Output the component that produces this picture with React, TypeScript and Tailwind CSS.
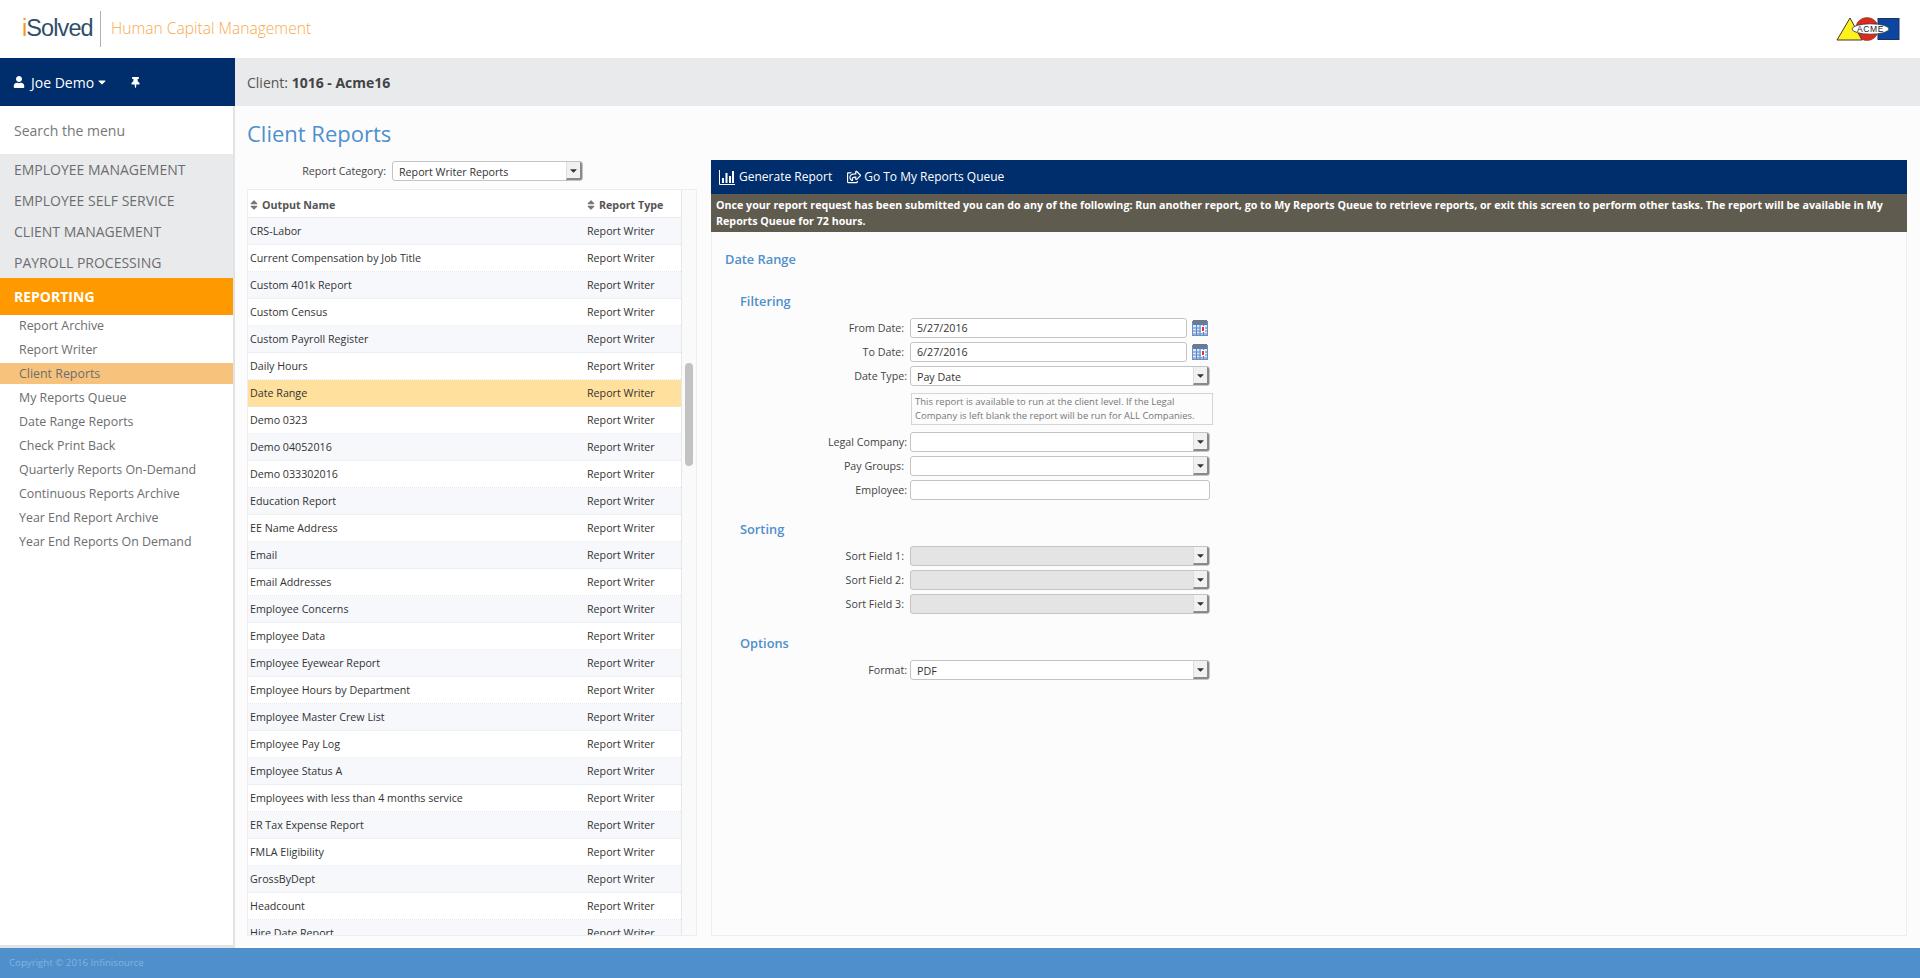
import React from "react";
import { FaUser, FaThumbtack, FaCaretDown, FaSort, FaRegShareSquare } from "react-icons/fa";

const menu = ["Employee Management", "Employee Self Service", "Client Management", "Payroll Processing"];
const sub = ["Report Archive", "Report Writer", "Client Reports", "My Reports Queue", "Date Range Reports", "Check Print Back", "Quarterly Reports On-Demand", "Continuous Reports Archive", "Year End Report Archive", "Year End Reports On Demand"];
const rows = ["CRS-Labor", "Current Compensation by Job Title", "Custom 401k Report", "Custom Census", "Custom Payroll Register", "Daily Hours", "Date Range", "Demo 0323", "Demo 04052016", "Demo 033302016", "Education Report", "EE Name Address", "Email", "Email Addresses", "Employee Concerns", "Employee Data", "Employee Eyewear Report", "Employee Hours by Department", "Employee Master Crew List", "Employee Pay Log", "Employee Status A", "Employees with less than 4 months service", "ER Tax Expense Report", "FMLA Eligibility", "GrossByDept", "Headcount", "Hire Date Report"];

function Arrow() {
  return (
    <span className="flex h-full w-[16px] shrink-0 items-center justify-center border-r-2 border-b-2 border-l border-r-[#8a8a8a] border-b-[#8a8a8a] border-l-[#ddd] bg-[#f1f1f1]">
      <FaCaretDown className="text-[11px] text-[#333]" />
    </span>
  );
}

function Select({ value = "", disabled = false, width = "w-[300px]" }: { value?: string; disabled?: boolean; width?: string }) {
  return (
    <div className={`flex h-[20px] ${width} items-center overflow-hidden rounded-[3px] border border-[#c4c4c4] ${disabled ? "bg-[#e4e4e4]" : "bg-white"}`}>
      <span className="flex-1 pt-[2px] pl-[6px] text-[10.7px] leading-none text-[#333]">{value}</span>
      <Arrow />
    </div>
  );
}

function Calendar() {
  return (
    <svg width="16" height="16" viewBox="0 0 16 16" className="ml-[5px] shrink-0">
      <rect x="0.5" y="1.5" width="15" height="14" fill="#dfe9f6" stroke="#6a8fc4" />
      <rect x="1" y="0" width="14" height="3" fill="#77787c" />
      <rect x="1" y="3" width="14" height="2" fill="#4f7fc4" />
      <path d="M1 8h14M1 11h14M1 14h14M4.5 5v10M8 5v10M11.5 5v10" stroke="#5b86c4" strokeWidth="1" />
      <rect x="9" y="6" width="4" height="6" fill="#fff" />
      <rect x="10" y="7" width="2" height="4" fill="#e5332a" />
    </svg>
  );
}

function Row({ label, end = 0, children }: { label: string; end?: number; children: React.ReactNode }) {
  return (
    <div className="mb-[4px] flex h-[20px] items-center">
      <span className={`w-[198px] shrink-0 text-right text-[10.7px] leading-none text-[#444] ${end ? "pr-[6px]" : "pr-[3px]"}`}>{label}</span>
      {children}
    </div>
  );
}

function DateRow({ label, value }: { label: string; value: string }) {
  return (
    <Row label={label} end={1}>
      <div className="flex h-[20px] w-[277px] items-center rounded-[3px] border border-[#c4c4c4] bg-white pt-[1px] pl-[6px] text-[10.7px] leading-none text-[#333]">{value}</div>
      <Calendar />
    </Row>
  );
}

function Section({ children, className }: { children: React.ReactNode; className: string }) {
  return <h3 className={`text-[12.8px] leading-[20px] font-semibold text-[#4f8fcc] ${className}`}>{children}</h3>;
}

export default function App() {
  return (
    <div className="flex h-[978px] w-[1920px] flex-col overflow-hidden bg-[#fcfcfc] font-['Open_Sans',sans-serif] text-[12px] text-[#333]">
      <header className="flex h-[58px] shrink-0 items-center bg-white pr-[20px] pl-[22px]">
        <span className="w-[70px] font-['Liberation_Sans',sans-serif] text-[23.5px] leading-none tracking-[-0.9px] text-[#2f4f68]">
          <span className="text-[#f39a1e]">i</span>Solved
        </span>
        <span className="mr-[10px] ml-[8px] h-[36px] w-px bg-[#a9b2bf]" />
        <span className="text-[15.6px] leading-none font-light text-[#f7a94c]">Human Capital Management</span>
        <svg width="64" height="24" viewBox="0 0 64 24" className="ml-auto">
          <rect x="42" y="1.5" width="21" height="21" fill="#0d46a0" stroke="#203060" />
          <circle cx="31" cy="12" r="11.5" fill="#e0281f" stroke="#552" strokeWidth="0.6" />
          <path d="M1 23 L14 1 L26 23 Z" fill="#fff21c" stroke="#433" strokeWidth="1" />
          <ellipse cx="34.5" cy="12" rx="18.5" ry="5.2" fill="#fff" stroke="#333" strokeWidth="0.8" />
          <text x="34.5" y="15" textAnchor="middle" fontSize="8.5" fontWeight="400" letterSpacing="0.6" fill="#222" fontFamily="Liberation Sans, sans-serif">ACME</text>
        </svg>
      </header>

      <div className="flex min-h-0 flex-1">
        <aside className="flex w-[235px] shrink-0 flex-col border-r-2 border-[#e2e3e5] bg-white">
          <div className="-mr-[2px] flex h-[48px] shrink-0 items-center bg-[#002d6b] pl-[13px] text-[14px] text-white">
            <FaUser className="text-[12px]" />
            <span className="ml-[6px]">Joe Demo</span>
            <FaCaretDown className="ml-[2px] text-[12px]" />
            <FaThumbtack className="ml-[22px] text-[11px]" />
          </div>
          <div className="flex h-[48px] shrink-0 items-center pl-[14px] text-[14px] text-[#777]">Search the menu</div>
          <nav className="bg-[#e9eaec]">
            {menu.map((m) => (
              <div key={m} className="flex h-[31px] items-center pl-[14px] text-[14px] text-[#6d6d6f] uppercase">{m}</div>
            ))}
          </nav>
          <div className="flex h-[37px] shrink-0 items-center bg-[#ff9900] pl-[14px] text-[14px] font-bold text-white uppercase">Reporting</div>
          <ul className="flex-1">
            {sub.map((s) => (
              <li key={s} className={`mb-[3px] flex h-[21px] items-center pt-[1px] pl-[19px] text-[12.4px] text-[#6d6d6f] ${s === "Client Reports" ? "bg-[#f7c37c]" : ""}`}>{s}</li>
            ))}
          </ul>
          <div className="h-[3px] shrink-0 bg-[#e2e3e5]" />
        </aside>

        <main className="flex min-w-0 flex-1 flex-col">
          <div className="flex h-[48px] shrink-0 items-center bg-[#e9eaec] pl-[12px] text-[14px] text-[#555]">
            Client:&nbsp;<b className="font-bold text-[#444]">1016 - Acme16</b>
          </div>
          <div className="flex min-h-0 flex-1 pr-[13px] pb-[12px] pl-[12px]">
            <section className="flex w-[450px] shrink-0 flex-col">
              <h1 className="mt-[11px] h-[32px] text-[22px] leading-[32px] font-normal text-[#4f8fcc]">Client Reports</h1>
              <div className="mt-[12px] flex h-[20px] items-center">
                <span className="w-[139px] text-right text-[10.7px] leading-none text-[#444]">Report Category:</span>
                <span className="ml-[6px]"><Select value="Report Writer Reports" width="w-[191px]" /></span>
              </div>
              <div className="mt-[8px] flex min-h-0 flex-1 overflow-hidden border border-[#edeeef]">
                <div className="min-w-0 flex-1 overflow-hidden">
                  <div className="flex h-[28px] items-center border-b border-[#e9eaec] bg-white pt-[3px] text-[10.7px] font-bold text-[#555]">
                    <span className="flex w-[339px] items-center pl-[2px]"><FaSort className="mr-[2px] -ml-[2px] text-[12px] text-[#777]" />Output Name</span>
                    <span className="flex items-center"><FaSort className="mr-[2px] -ml-[2px] text-[12px] text-[#777]" />Report Type</span>
                  </div>
                  {rows.map((r, i) => (
                    <div key={r} className={`flex h-[27px] items-center border-b border-dotted border-[#e6e7ea] text-[10.7px] text-[#333] ${r === "Date Range" ? "bg-[#ffe09c]" : i % 2 === 0 ? "bg-[#f6f8fc]" : "bg-white"}`}>
                      <span className="w-[339px] pl-[2px]">{r}</span>
                      <span>Report Writer</span>
                    </div>
                  ))}
                </div>
                <div className="relative w-[15px] shrink-0 border-l border-[#e6e7e9] bg-[#fafafa]">
                  <div className="absolute top-[173px] left-[3px] h-[103px] w-[8px] rounded-full bg-[#c2c2c2]" />
                </div>
              </div>
            </section>

            <section className="ml-[14px] flex min-w-0 flex-1 flex-col pt-[12px]">
              <div className="mt-[42px] flex min-h-0 flex-1 flex-col border-r border-b border-l border-[#eeeeef]">
                <div className="-mx-px flex h-[34px] shrink-0 items-center bg-[#002d6b] pl-[8px] text-[12px] text-white">
                  <svg width="16" height="15" viewBox="0 0 16 15" className="mr-[4px] shrink-0" fill="none" stroke="#fff">
                    <path d="M0.5 0v14.5H16" />
                    <path d="M3 8h2v5H3zM6.5 3h2v10h-2zM10 6h2v7h-2zM13 1h2v12h-2z" fill="#fff" stroke="none" />
                  </svg>
                  Generate Report
                  <FaRegShareSquare className="mr-[3px] ml-[15px] text-[14px]" />
                  <span>Go To My Reports Queue</span>
                </div>
                <div className="-mx-px h-[38px] shrink-0 bg-[#5f5b4f] px-[5px] pt-[3px] text-[10.7px] leading-[16px] font-bold text-white">
                  Once your report request has been submitted you can do any of the following: Run another report, go to My Reports Queue to retrieve reports, or exit this screen to perform other tasks. The report will be available in My Reports Queue for 72 hours.
                </div>
                <div className="flex-1">
                  <Section className="mt-[17px] ml-[13px]">Date Range</Section>
                  <Section className="mt-[22px] ml-[28px]">Filtering</Section>
                  <div className="mt-[7px]">
                    <DateRow label="From Date:" value="5/27/2016" />
                    <DateRow label="To Date:" value="6/27/2016" />
                    <Row label="Date Type:"><Select value="Pay Date" /></Row>
                    <div className="mt-[7px] mb-[7px] ml-[199px] h-[32px] w-[302px] border border-[#d5d5d5] px-[3px] py-[1px] text-[9.5px] leading-[14px] text-[#777]">
                      This report is available to run at the client level. If the Legal Company is left blank the report will be run for ALL Companies.
                    </div>
                    <Row label="Legal Company:"><Select /></Row>
                    <Row label="Pay Groups:" end={1}><Select /></Row>
                    <Row label="Employee:"><div className="h-[20px] w-[300px] rounded-[3px] border border-[#c4c4c4] bg-white" /></Row>
                  </div>
                  <Section className="mt-[19px] ml-[28px]">Sorting</Section>
                  <div className="mt-[7px]">
                    <Row label="Sort Field 1:" end={1}><Select disabled /></Row>
                    <Row label="Sort Field 2:" end={1}><Select disabled /></Row>
                    <Row label="Sort Field 3:" end={1}><Select disabled /></Row>
                  </div>
                  <Section className="mt-[19px] ml-[28px]">Options</Section>
                  <div className="mt-[7px]"><Row label="Format:"><Select value="PDF" /></Row></div>
                </div>
              </div>
            </section>
          </div>
        </main>
      </div>

      <footer className="flex h-[30px] shrink-0 items-center bg-[#4f8fcc] pl-[9px] text-[9.7px] text-[#86b3de]">Copyright © 2016 Infinisource</footer>
    </div>
  );
}
